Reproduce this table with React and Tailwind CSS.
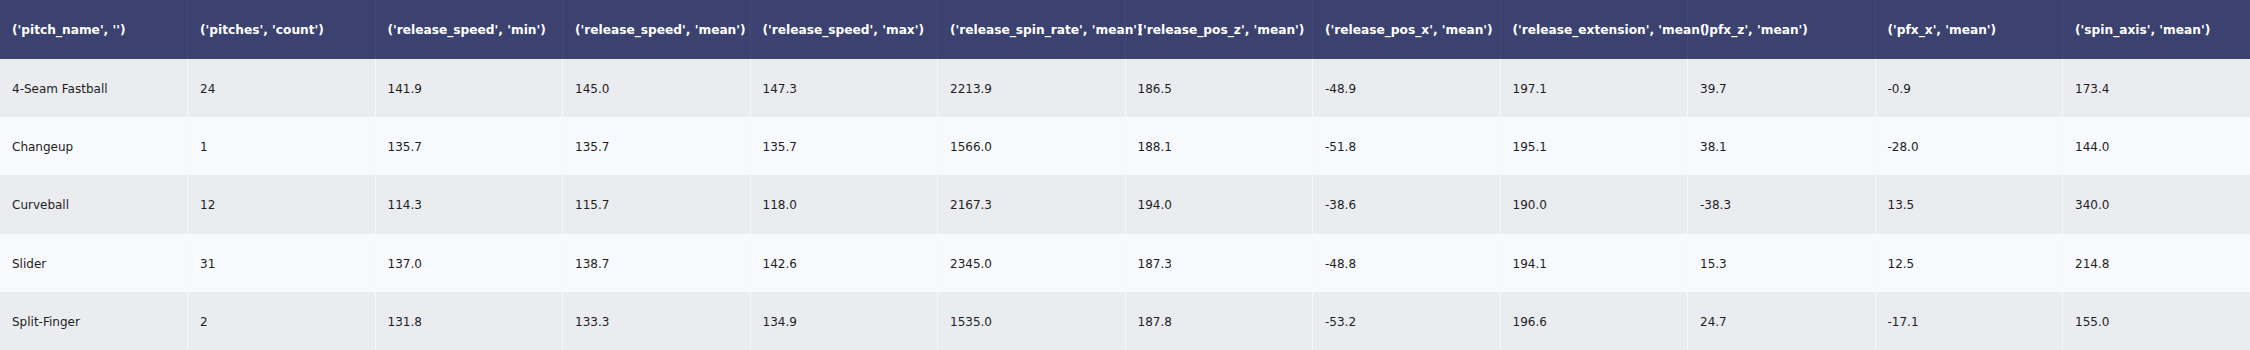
import React from 'react';

const columns = [
  "('pitch_name', '')",
  "('pitches', 'count')",
  "('release_speed', 'min')",
  "('release_speed', 'mean')",
  "('release_speed', 'max')",
  "('release_spin_rate', 'mean')",
  "('release_pos_z', 'mean')",
  "('release_pos_x', 'mean')",
  "('release_extension', 'mean')",
  "('pfx_z', 'mean')",
  "('pfx_x', 'mean')",
  "('spin_axis', 'mean')",
];

const rows = [
  ['4-Seam Fastball', '24', '141.9', '145.0', '147.3', '2213.9', '186.5', '-48.9', '197.1', '39.7', '-0.9', '173.4'],
  ['Changeup', '1', '135.7', '135.7', '135.7', '1566.0', '188.1', '-51.8', '195.1', '38.1', '-28.0', '144.0'],
  ['Curveball', '12', '114.3', '115.7', '118.0', '2167.3', '194.0', '-38.6', '190.0', '-38.3', '13.5', '340.0'],
  ['Slider', '31', '137.0', '138.7', '142.6', '2345.0', '187.3', '-48.8', '194.1', '15.3', '12.5', '214.8'],
  ['Split-Finger', '2', '131.8', '133.3', '134.9', '1535.0', '187.8', '-53.2', '196.6', '24.7', '-17.1', '155.0'],
];

export default function App() {
  return (
    <div className="w-[2250px] h-[350px] overflow-hidden bg-[#f8f9fc] font-['DejaVu_Sans',Verdana,sans-serif] text-[12px]">
      <table className="w-full table-fixed border-collapse">
        <thead>
          <tr className="h-[59px] bg-[#3c4270]">
            {columns.map((c) => (
              <th
                key={c}
                className="px-3 pt-[2px] text-left font-bold text-[12.2px] text-white whitespace-nowrap border-r border-[#434978] last:border-r-0"
              >
                {c}
              </th>
            ))}
          </tr>
        </thead>
        <tbody>
          {rows.map((r, i) => (
            <tr key={r[0]} className={`h-[58.2px] ${i % 2 === 0 ? 'bg-[#ebecf0]' : 'bg-[#f8f9fc]'}`}>
              {r.map((v, j) => (
                <td
                  key={j}
                  className="px-3 pt-[2px] text-left text-[#1e1e1e] whitespace-nowrap border-r border-[#f6f7fa] last:border-r-0"
                >
                  {v}
                </td>
              ))}
            </tr>
          ))}
        </tbody>
      </table>
    </div>
  );
}
